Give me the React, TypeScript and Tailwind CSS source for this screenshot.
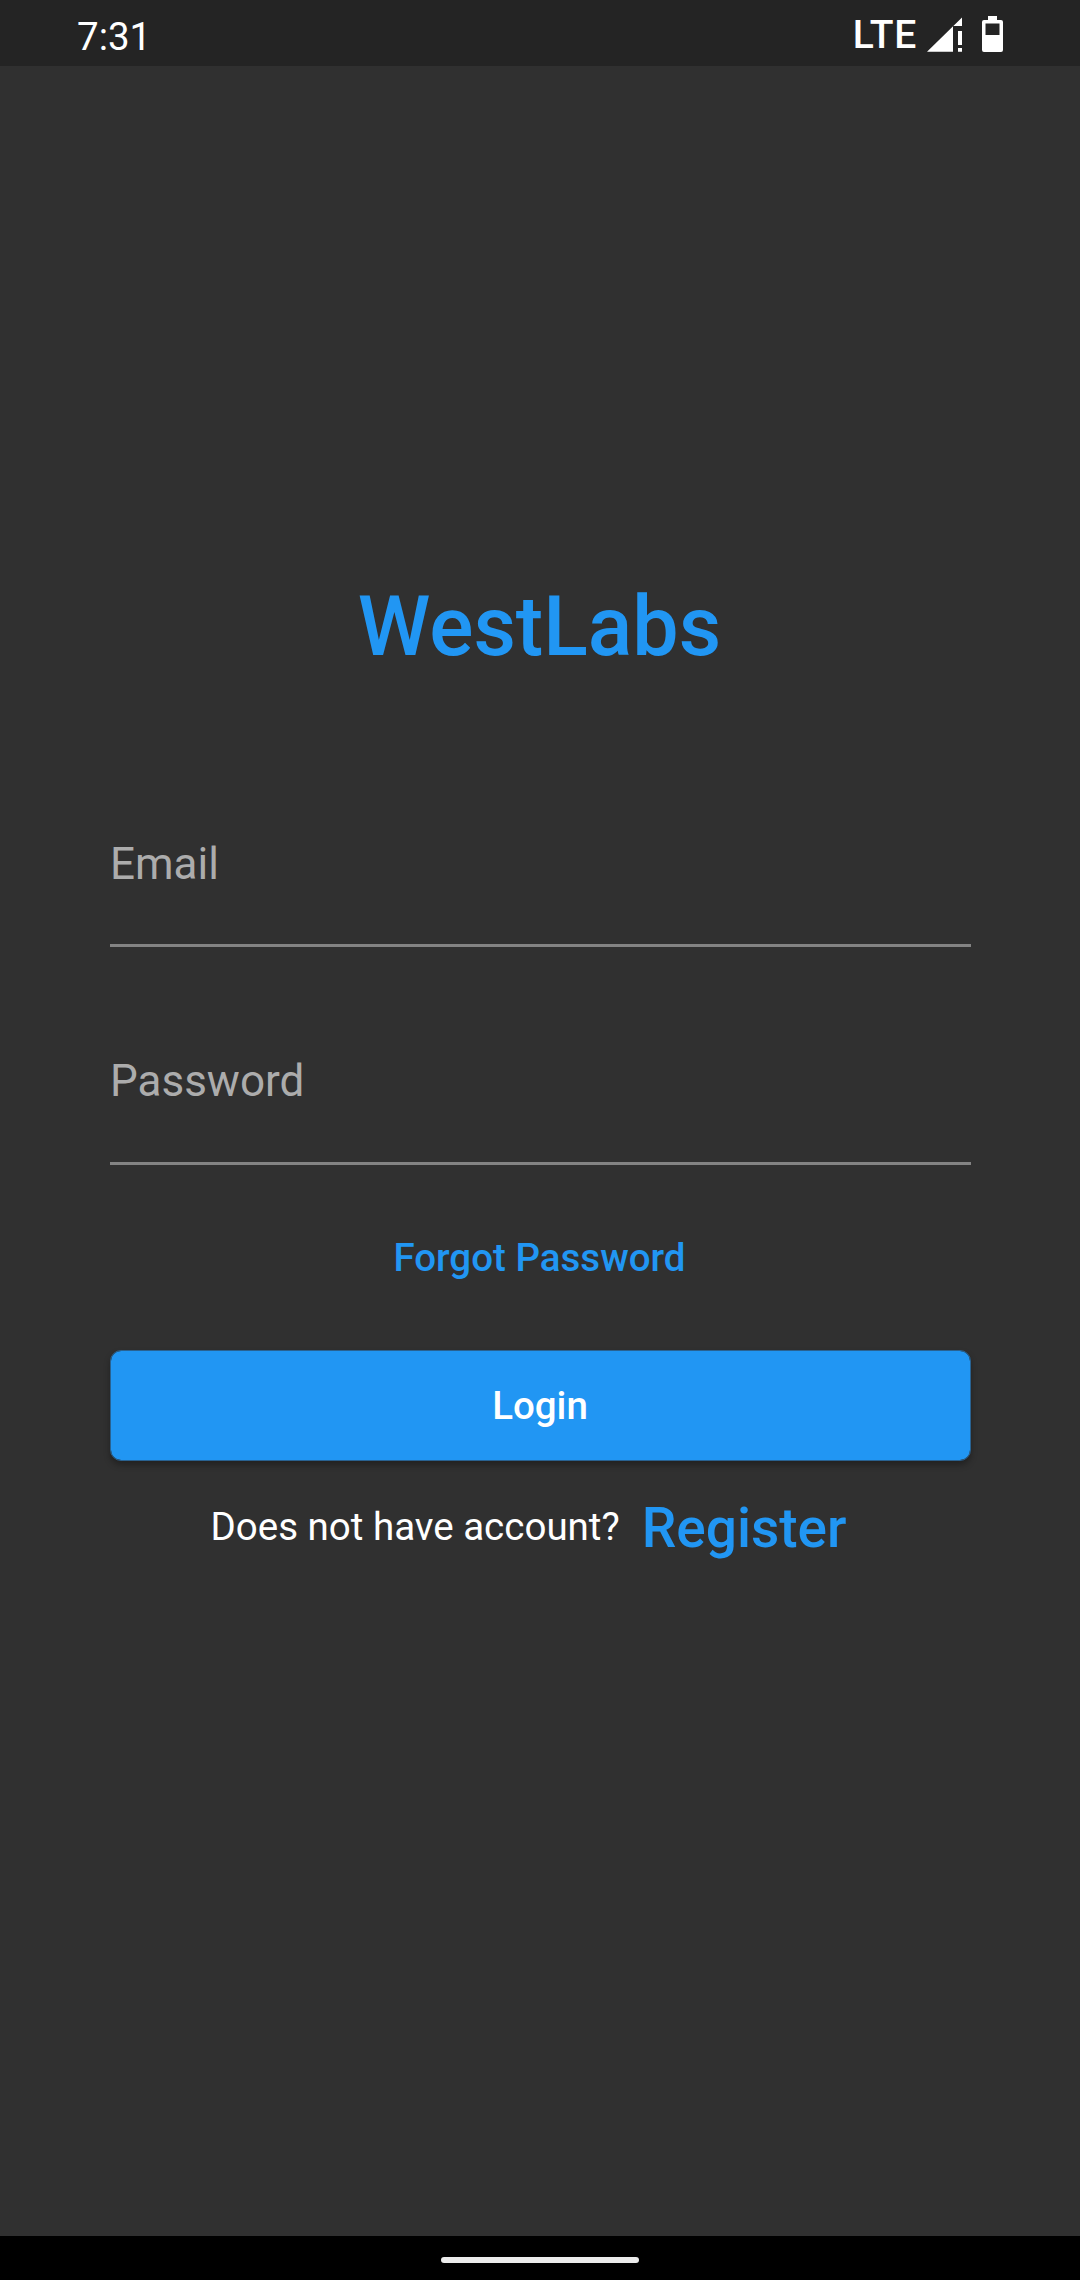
export default function App() {
  return (
    <div className="flex h-[2280px] w-[1080px] flex-col overflow-hidden bg-[#303030] font-['Roboto',sans-serif] text-white">
      <header className="flex h-[66px] shrink-0 items-start justify-between bg-[#242424] pr-[77px] pl-[77px]">
        <span className="mt-[14px] text-[38.5px] leading-[46px]">7:31</span>
        <div className="flex items-start">
          <span className="mt-[12px] text-[39px] leading-[46px] font-medium tracking-[0.7px]">LTE</span>
          <svg className="mt-[17px] ml-[10px]" width="36" height="35" viewBox="0 0 36 35" fill="white">
            <path d="M0 34.7 35 .5V9H26v25.7ZM31 14h4v14h-4ZM31 31h4v3.7h-4Z" />
          </svg>
          <svg className="mt-[16px] ml-[19px]" width="21" height="36" viewBox="0 0 21 36" fill="white">
            <path d="M6 0h9v4h4q2 0 2 2v28q0 2-2 2H2q-2 0-2-2V6q0-2 2-2h4ZM3.5 7.5V19h14V7.5Z" fillRule="evenodd" />
          </svg>
        </div>
      </header>
      <main className="flex flex-1 flex-col pr-[109px] pl-[110px]">
        <h1 className="mt-[512px] pr-[2px] text-center text-[82.5px] leading-[98px] font-medium text-[#2196f3]">WestLabs</h1>
        <label className="mt-[162px] h-[109px] border-b-[3px] border-[#838383] text-[44px] leading-[52px] text-[#acacac]">Email</label>
        <label className="mt-[108px] h-[110px] border-b-[3px] border-[#838383] text-[44px] leading-[52px] text-[#acacac]">Password</label>
        <a className="mt-[70px] pr-[2px] text-center text-[38.5px] leading-[45px] font-medium text-[#2196f3]">Forgot Password</a>
        <button className="mt-[70px] h-[111px] rounded-[11px] border border-[#296291] bg-[#2196f3] bg-clip-padding pr-px text-[38.5px] leading-[45px] font-medium shadow-[0_4px_6px_rgba(0,0,0,0.3)]">Login</button>
        <div className="mt-[35px] flex items-start justify-center pr-[24px]">
          <span className="mt-2 text-[38.5px] leading-[45px]">Does not have account?</span>
          <a className="ml-[22px] text-[55px] leading-[64px] font-medium text-[#2196f3]">Register</a>
        </div>
      </main>
      <footer className="flex h-[44px] shrink-0 items-start justify-center bg-black">
        <div className="mt-[21px] h-[6px] w-[198px] rounded-[3px] bg-[#ebebeb]" />
      </footer>
    </div>
  );
}
